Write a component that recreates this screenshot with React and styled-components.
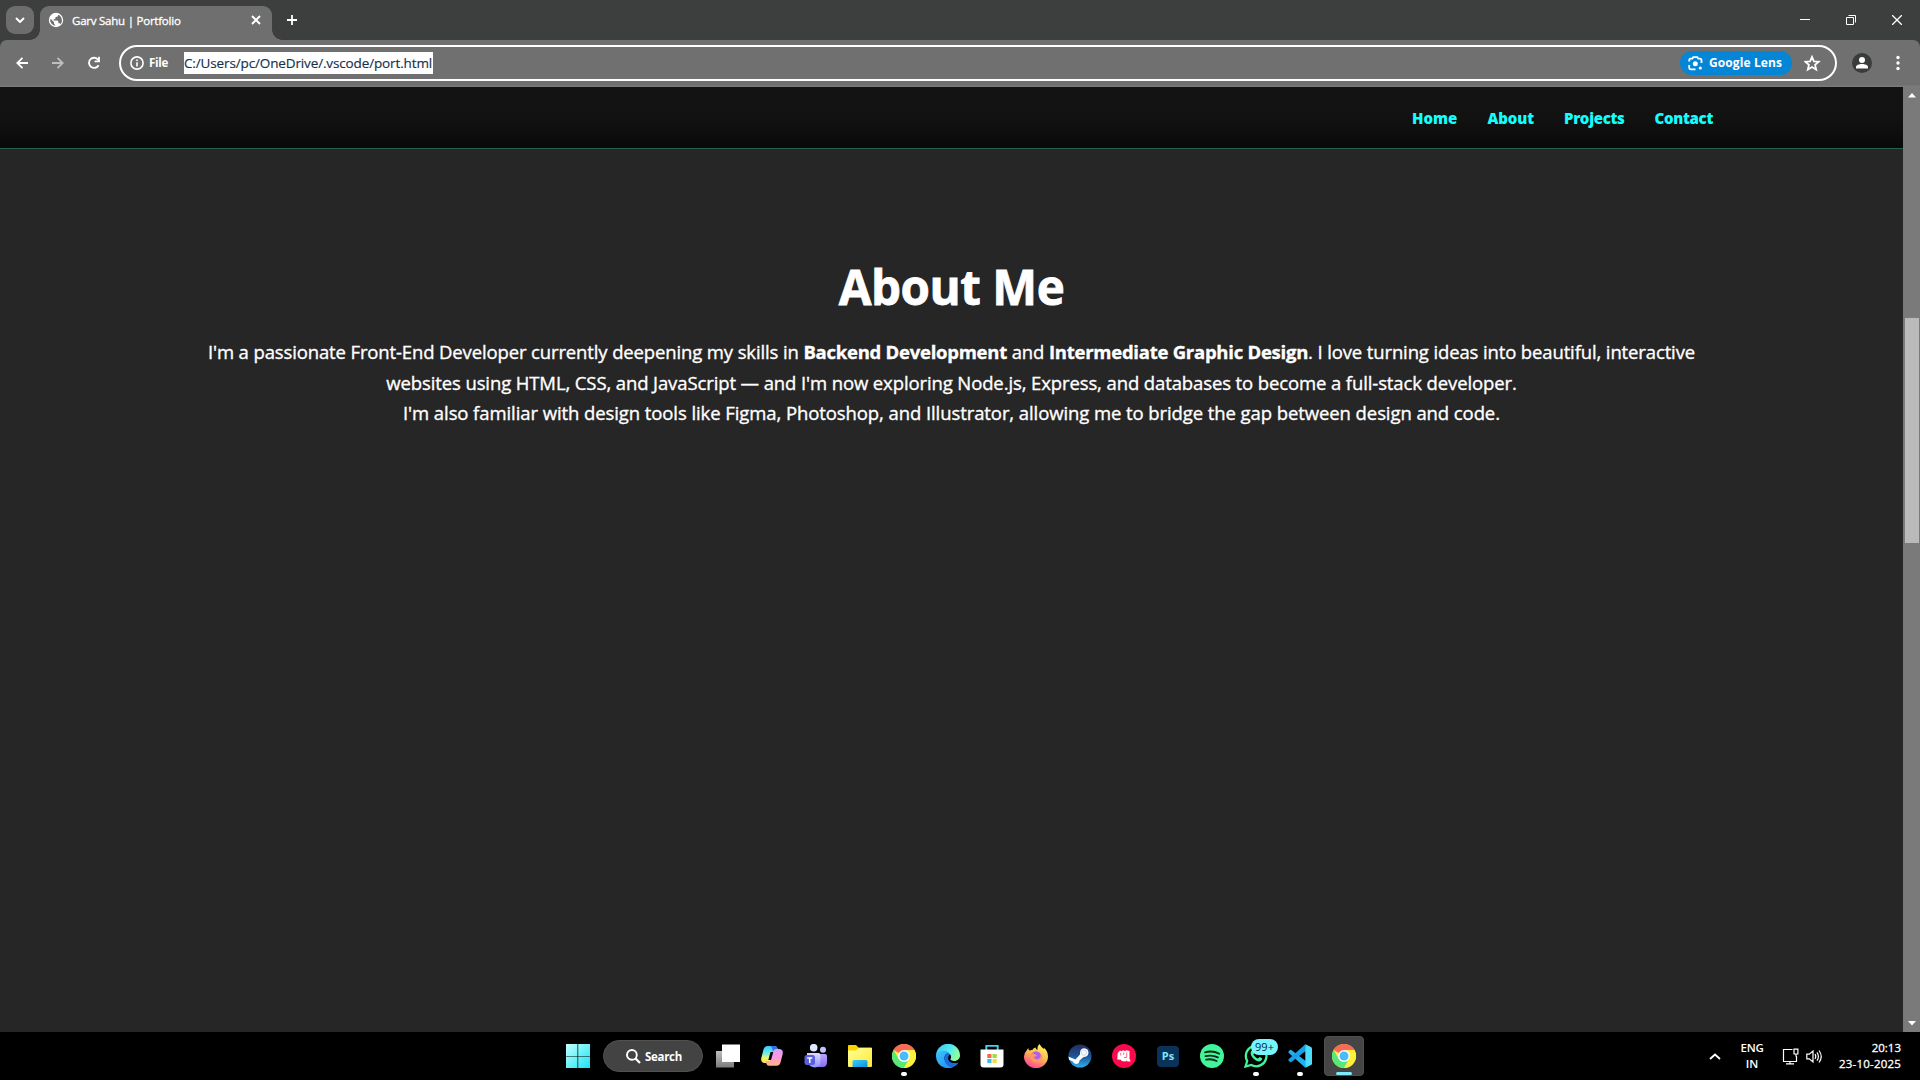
import React from "react";
import styled, { createGlobalStyle } from "styled-components";

const Global = createGlobalStyle`
  *, *::before, *::after { box-sizing: border-box; }
  html, body { margin: 0; padding: 0; }
  body { background: #000; font-family: "Open Sans", "Noto Sans", sans-serif; overflow: hidden; }
  svg { display: block; }
`;

const Screen = styled.div`
  width: 1920px;
  height: 1080px;
  display: flex;
  flex-direction: column;
  overflow: hidden;
`;

const Label = styled.span`
  font-size: ${(p) => p.$size}px;
  font-weight: ${(p) => p.$weight || 400};
  letter-spacing: ${(p) => p.$track || 0}px;
  line-height: ${(p) => p.$line || 16}px;
  color: ${(p) => p.$color || "#fff"};
  -webkit-text-stroke: ${(p) => p.$stroke || 0}px currentColor;
  white-space: nowrap;
`;

/* ---------- browser chrome ---------- */
const TabStrip = styled.div`
  height: 40px;
  flex: none;
  display: flex;
  background: #3d3f3e;
  padding-left: 6px;
`;

const TabMenu = styled.div`
  width: 28px;
  height: 28px;
  margin-top: 6px;
  border-radius: 9px;
  background: #6d6d6d;
  display: grid;
  place-items: center;
`;

const Tab = styled.div`
  position: relative;
  width: 232px;
  height: 34px;
  margin: 6px 0 0 6px;
  padding: 0 9px 6px 8px;
  border-radius: 9px 9px 0 0;
  background: #6f6f6f;
  display: flex;
  align-items: center;
  &::before, &::after {
    content: "";
    position: absolute;
    bottom: 0;
    width: 10px;
    height: 10px;
  }
  &::before { left: -10px; background: radial-gradient(circle at 0 0, transparent 9.5px, #6f6f6f 10px); }
  &::after { right: -10px; background: radial-gradient(circle at 100% 0, transparent 9.5px, #6f6f6f 10px); }
`;

const TabTitle = styled.div`
  flex: 1;
  padding: 2px 0 0 8px;
  display: flex;
`;

const NewTab = styled.div`
  margin: 6px 0 0 10px;
  width: 20px;
  height: 28px;
  display: grid;
  place-items: center;
`;

const WindowButtons = styled.div`
  margin-left: auto;
  display: flex;
`;

const WindowButton = styled.div`
  width: 46px;
  height: 40px;
  display: grid;
  place-items: center;
`;

const ToolbarBack = styled.div`
  background: #3d3f3e;
`;

const Toolbar = styled.div`
  height: 47px;
  flex: none;
  display: flex;
  align-items: center;
  background: linear-gradient(#707070 0 45px, #7a7a7a 46px);
  border-radius: 7px 7px 0 0;
  padding-bottom: 1px;
`;

const NavButton = styled.div`
  width: 36px;
  height: 36px;
  display: grid;
  place-items: center;
  opacity: ${(p) => (p.$dim ? 0.55 : 1)};
`;

const NavButtons = styled.div`
  display: flex;
  padding-left: 4px;
  width: 119px;
`;

const Omnibox = styled.div`
  width: 1718px;
  height: 36px;
  border: 2px solid #fff;
  border-radius: 18px;
  display: flex;
  align-items: center;
  padding: 0 14px 0 9px;
`;

const Scheme = styled.div`
  width: 54px;
  display: flex;
  align-items: center;
  gap: 5px;
`;

const Selection = styled.div`
  height: 22px;
  width: 249px;
  background: #fff;
  display: flex;
  align-items: center;
`;

const LensPill = styled.div`
  margin-left: auto;
  width: 112px;
  height: 24px;
  border-radius: 12px;
  background: #0485d6;
  display: flex;
  align-items: center;
  padding-left: 8px;
  gap: 6px;
`;

const StarBox = styled.div`
  margin-left: 12px;
`;

const Avatar = styled.div`
  margin-left: 15px;
`;

const Dots = styled.div`
  margin-left: 24px;
`;

/* ---------- page ---------- */
const Viewport = styled.div`
  flex: 1;
  display: flex;
  min-height: 0;
`;

const Page = styled.main`
  flex: 1;
  background: #262626;
`;

const Header = styled.header`
  height: 62px;
  display: flex;
  justify-content: flex-end;
  align-items: center;
  gap: 30px;
  padding: 1px 190px 0 0;
  background: linear-gradient(#131313 0, #121212 50%, #090909 100%);
  border-bottom: 1px solid #2b5f53;
`;

const About = styled.section`
  padding-top: 105px;
  display: flex;
  flex-direction: column;
  align-items: center;
  color: #fff;
`;

const Title = styled.h2`
  margin: 0;
  font-size: 47.5px;
  font-weight: 700;
  line-height: 66px;
  letter-spacing: -0.45px;
  -webkit-text-stroke: 0.8px #fff;
  white-space: nowrap;
`;

const Copy = styled.div`
  padding-top: 17px;
  display: flex;
  flex-direction: column;
  align-items: center;
`;

const Line = styled.p`
  margin: 0;
  font-size: 18.5px;
  line-height: 30.7px;
  letter-spacing: ${(p) => p.$track || 0}px;
  -webkit-text-stroke: 0.35px #fff;
  white-space: nowrap;
  b { letter-spacing: -0.25px; }
`;

const Scrollbar = styled.div`
  width: 17px;
  background: #7a7a7a;
  display: flex;
  flex-direction: column;
  align-items: center;
`;

const ScrollArrow = styled.div`
  height: 17px;
  display: grid;
  place-items: center;
`;

const Track = styled.div`
  flex: 1;
  padding-top: 214px;
`;

const Thumb = styled.div`
  width: 14px;
  height: 225px;
  background: #bababa;
`;

/* ---------- taskbar ---------- */
const Taskbar = styled.div`
  height: 48px;
  flex: none;
  background: #000;
  display: flex;
`;

const Apps = styled.div`
  display: flex;
  align-items: center;
  padding-left: 566px;
`;

const SearchPill = styled.div`
  width: 100px;
  height: 32px;
  margin: 0 3px 0 13px;
  border-radius: 16px;
  background: #434343;
  border: 1px solid #505050;
  display: flex;
  align-items: center;
  padding: 1px 0 0 22px;
  gap: 4px;
`;

const AppSlot = styled.div`
  position: relative;
  width: 40px;
  height: 40px;
  margin: 0 2px;
  border-radius: 4px;
  display: grid;
  place-items: center;
  background: ${(p) => (p.$active ? "#454545" : "transparent")};
  border: 1px solid ${(p) => (p.$active ? "#505050" : "transparent")};
`;

const Indicator = styled.div`
  position: absolute;
  bottom: ${(p) => (p.$active ? 0 : -1)}px;
  left: 50%;
  transform: translateX(-50%);
  width: ${(p) => (p.$active ? 16 : 6)}px;
  height: ${(p) => (p.$active ? 3 : 4)}px;
  border-radius: 2px;
  background: ${(p) => (p.$active ? "#7fe8fa" : "#fff")};
`;

const Badge = styled.div`
  position: absolute;
  left: 14px;
  top: 2px;
  width: 27px;
  height: 16px;
  border-radius: 8px;
  background: #76f5ff;
  display: grid;
  place-items: center;
`;

const Tray = styled.div`
  margin-left: auto;
  display: flex;
  align-items: center;
  padding-right: 19px;
`;

const TrayIcons = styled.div`
  display: flex;
  align-items: center;
  gap: 7px;
  width: 57px;
`;

const Lang = styled.div`
  width: 30px;
  margin: 0 15px 0 16px;
  display: flex;
  flex-direction: column;
  align-items: center;
`;

const Clock = styled.div`
  width: 62px;
  display: flex;
  flex-direction: column;
  align-items: flex-end;
`;

const PsTile = styled.div`
  width: 22px;
  height: 21px;
  border-radius: 4px;
  background: #0a3357;
  display: grid;
  place-items: center;
`;

/* ---------- icons ---------- */
const Stroke = ({ w, h, d, sw = 2 }) => (
  <svg width={w} height={h} viewBox={`0 0 ${w} ${h}`} fill="none" stroke="#fff" strokeWidth={sw}>
    <path d={d} />
  </svg>
);

const Globe = () => (
  <svg width="16" height="16" viewBox="0 0 16 16">
    <circle cx="8" cy="8" r="7.2" fill="#fff" />
    <path d="M2.600 6.800L6 10.200V11.500L7.400 13.600C4.400 13.400 2.300 10.800 2.200 8.200ZM10 2.800V4.200L7.400 5.300V6.800L5.600 7.400V8.400H9.400L10.400 9.600V11.200H11.600L12.800 12C14 10.200 14.200 8.500 13.600 6.500C12.900 4.500 11.700 3.400 10 2.800Z" fill="#6f6f6f" />
  </svg>
);

const Reload = () => (
  <svg width="14" height="14" viewBox="0 0 14 14">
    <path d="M11.600 9.200A5.100 5.100 0 1 1 10.800 3.300L12 4.600" fill="none" stroke="#fff" strokeWidth="1.900" />
    <path d="M12.900 .8V6.200H7.600V4.400H11.100V.8Z" fill="#fff" />
  </svg>
);

const Info = () => (
  <svg width="14" height="14" viewBox="0 0 14 14">
    <circle cx="7" cy="7" r="6.100" fill="none" stroke="#fff" strokeWidth="1.600" />
    <path d="M6.200 6.200h1.600v4.200H6.200zM6.200 3.500h1.600v1.600H6.200z" fill="#fff" />
  </svg>
);

const Lens = () => (
  <svg width="15" height="15" viewBox="0 0 15 15">
    <path d="M1.200 5.500V4.200Q1.200 2.700 2.700 2.700H4.300L5.300 1.200H9.300L10.300 2.700H11.800Q13.500 2.700 13.500 4.400V7M1.200 9V11.800Q1.200 13.300 2.700 13.300H7.500" fill="none" stroke="#fff" strokeWidth="1.800" />
    <circle cx="7.300" cy="7.700" r="2.500" fill="#fff" />
    <circle cx="12.300" cy="12" r="1.600" fill="#fff" />
  </svg>
);

const Star = () => (
  <svg width="17" height="17" viewBox="0 0 17 17">
    <path d="M8 1.900L9.900 6.300L14.700 6.700L11.100 9.900L12.200 14.600L8 12.100L3.800 14.600L4.900 9.900L1.300 6.700L6.100 6.300Z" fill="none" stroke="#fff" strokeWidth="1.800" />
  </svg>
);

const Person = () => (
  <svg width="20" height="20" viewBox="0 0 20 20">
    <circle cx="10" cy="10" r="10" fill="#3a3b3b" />
    <circle cx="10" cy="7" r="3" fill="#fff" />
    <path d="M4 15.500V14C4 12 7 11 10 11S16 12 16 14V15.500Z" fill="#fff" />
  </svg>
);

const Kebab = () => (
  <svg width="4" height="16" viewBox="0 0 4 16" fill="#fff">
    <circle cx="2" cy="2.500" r="1.700" />
    <circle cx="2" cy="8" r="1.700" />
    <circle cx="2" cy="13.500" r="1.700" />
  </svg>
);

const Windows = () => (
  <svg width="24" height="24" viewBox="0 0 24 24">
    <defs>
      <linearGradient id="win" gradientUnits="userSpaceOnUse" x1="0" y1="0" x2="24" y2="24">
        <stop offset="0" stopColor="#c4ffff" />
        <stop offset=".5" stopColor="#6cf2f8" />
        <stop offset="1" stopColor="#22e0f4" />
      </linearGradient>
    </defs>
    <path d="M0 0H11.500V12H0ZM12.200 0H24V12H12.200ZM0 12.600H11.500V24H0ZM12.200 12.600H24V24H12.200Z" fill="url(#win)" />
  </svg>
);

const Magnifier = () => (
  <svg width="15" height="15" viewBox="0 0 15 15" fill="none" stroke="#fff" strokeWidth="1.900">
    <circle cx="5.900" cy="5.900" r="4.900" />
    <path d="M9.500 9.500L14 14" strokeWidth="2.300" />
  </svg>
);

const TaskView = () => (
  <svg width="24" height="24" viewBox="0 0 24 24">
    <defs>
      <linearGradient id="tv" x1="0" y1="0" x2="0" y2="1">
        <stop offset="0" stopColor="#bdbdbd" />
        <stop offset="1" stopColor="#7c7c7c" />
      </linearGradient>
    </defs>
    <rect x="0" y="7" width="18" height="16.500" fill="url(#tv)" />
    <rect x="6" y="0.500" width="18" height="17.500" fill="#fff" />
  </svg>
);

const Copilot = () => (
  <svg width="24" height="24" viewBox="0 0 24 24">
    <defs>
      <linearGradient id="cp1" x1="0" y1="0" x2="0" y2="1">
        <stop offset="0" stopColor="#3cc4ff" />
        <stop offset=".45" stopColor="#6ff0e0" />
        <stop offset=".7" stopColor="#f2f86a" />
        <stop offset="1" stopColor="#ffe04a" />
      </linearGradient>
      <linearGradient id="cp2" x1="0" y1="0" x2="0" y2="1">
        <stop offset="0" stopColor="#d9a0ff" />
        <stop offset=".5" stopColor="#ff98e0" />
        <stop offset="1" stopColor="#ffb878" />
      </linearGradient>
    </defs>
    <path d="M7.500 2H15Q17 2 17.700 4.500L18.500 7H15.500Q13.500 7 12.800 9.200L10.600 17.200Q10 19 8 19H4.500Q.5 18.500 1.300 14L3.500 5.500Q4.500 2 7.500 2Z" fill="url(#cp1)" />
    <path d="M14 2Q17 2 17.700 4.500L18.500 7H14.500Q13.500 7 13 8.500Q12.500 3 10.500 2Z" fill="#2f6ef0" />
    <path d="M16.500 21.800H9Q7 21.800 6.300 19.500L5.500 17H8.500Q10.500 17 11.200 14.800L13.400 6.800Q14 5 16 5H19.500Q23.500 5.500 22.700 10L20.500 18.500Q19.500 21.800 16.500 21.800Z" fill="url(#cp2)" />
    <path d="M10.500 8H13.200L11 16H8.300Z" fill="#0a0510" />
  </svg>
);

const Teams = () => (
  <svg width="24" height="24" viewBox="0 0 24 24">
    <defs>
      <linearGradient id="tm" x1="0" y1="0" x2="0" y2="1">
        <stop offset="0" stopColor="#dcdcff" />
        <stop offset="1" stopColor="#8f90fa" />
      </linearGradient>
      <linearGradient id="tm2" x1="0" y1="0" x2="0" y2="1">
        <stop offset="0" stopColor="#b9a4ff" />
        <stop offset="1" stopColor="#8a6ef0" />
      </linearGradient>
    </defs>
    <circle cx="9.700" cy="3.700" r="3.800" fill="#dfe6ff" />
    <circle cx="19" cy="5.800" r="3" fill="#c2c4ff" />
    <path d="M14 10H21Q23 10 23 12V18Q23 23 18.500 23H14Z" fill="url(#tm2)" />
    <path d="M3 9H14.500Q16.500 9 16.500 11V17Q16.500 23.500 11 23.500T3 17Z" fill="url(#tm)" />
    <rect x=".5" y="11" width="10.500" height="10" rx="2.500" fill="#5a5fe0" />
    <path d="M3.200 13.200H8.300V14.700H6.500V19H5V14.700H3.200Z" fill="#fff" />
  </svg>
);

const Explorer = () => (
  <svg width="24" height="24" viewBox="0 0 24 24">
    <defs>
      <linearGradient id="fe" x1="0" y1="0" x2="1" y2="1">
        <stop offset="0" stopColor="#ffff94" />
        <stop offset="1" stopColor="#ffe83c" />
      </linearGradient>
      <linearGradient id="fb" x1="0" y1="0" x2="1" y2="1">
        <stop offset="0" stopColor="#35d0f6" />
        <stop offset="1" stopColor="#0f8fe0" />
      </linearGradient>
    </defs>
    <path d="M0 2Q0 1 1 1H8L10.500 3.500H23Q24 3.500 24 4.500V10H0Z" fill="#fad400" />
    <path d="M0 6.500H8L10.500 4H24V22Q24 23 23 23H1Q0 23 0 22Z" fill="url(#fe)" />
    <path d="M4.500 23V17.500Q4.500 16 6 16H18Q19.500 16 19.500 17.500V23Z" fill="url(#fb)" />
  </svg>
);

const Chrome = () => (
  <svg width="24" height="24" viewBox="0 0 48 48">
    <circle cx="24" cy="24" r="24" fill="#fff03c" />
    <path d="M24 24L3.200 12A24 24 0 0 1 44.800 12H24Z" fill="#fb6a58" />
    <path d="M3.200 12A24 24 0 0 0 24 48L34.400 30L24 24L13.600 30Z" fill="#56e878" />
    <path d="M44.800 12A24 24 0 0 1 24 48L34.400 30Q37 22 32 12Z" fill="#fff03c" />
    <circle cx="24" cy="24" r="12" fill="#fff" />
    <circle cx="24" cy="24" r="9" fill="#46bdfa" />
  </svg>
);

const Edge = () => (
  <svg width="24" height="24" viewBox="0 0 24 24">
    <defs>
      <linearGradient id="ed1" x1="0" y1="0" x2="1" y2=".4">
        <stop offset="0" stopColor="#35c4f6" />
        <stop offset=".6" stopColor="#52eaf0" />
        <stop offset="1" stopColor="#8dffa0" />
      </linearGradient>
      <linearGradient id="ed2" x1="0" y1="0" x2="1" y2="1">
        <stop offset="0" stopColor="#3cc4fa" />
        <stop offset="1" stopColor="#1f86f0" />
      </linearGradient>
    </defs>
    <path d="M0 12A12 12 0 0 1 24 11.500C24 15 21.500 17 18 17C15 17 13.500 16 14.500 14.500C16 12 13.500 9 10 9C5 9 0 12 0 12Z" fill="url(#ed1)" />
    <path d="M0 12C.5 8.500 4 6.500 8 6.800C11 7 13 8.500 13.500 9.500C10.500 8.500 8.500 11 8.500 14C8.500 18.500 13 21 17 20.500C19.500 20.200 21.500 19 22.400 18.200A12 12 0 0 1 0 12Z" fill="url(#ed2)" />
    <path d="M13.300 9.500C10.500 9 8.300 11 8.300 14.500C8.300 18.500 11.500 22 15.500 23.500C19 22.500 21.500 20 22.500 18.200C19 20 14.500 19 12.800 16.500C11.800 14.800 12.500 12 14 11Z" fill="#1a6ae0" />
    <path d="M14 10.500C12 12 11.800 15 13.300 17C15 19 19.500 19.500 22.700 17.300L24 14C22.500 16.500 20 17 18 17C15 17 13.500 16 14.500 14.500C15.200 13 14.800 11.500 14 10.500Z" fill="#000" />
  </svg>
);

const Store = () => (
  <svg width="24" height="24" viewBox="0 0 24 24">
    <path d="M6.300 6V1.900H17.700V6" fill="none" stroke="#44d2f0" strokeWidth="1.900" />
    <path d="M.5 5.500H23.500V20.500Q23.500 23.500 20.500 23.500H3.500Q.5 23.500 .5 20.500Z" fill="#fff" />
    <path d="M7.300 10H11.500V14H7.300Z" fill="#f2694a" />
    <path d="M12.500 10H16.700V14H12.500Z" fill="#9fdc3c" />
    <path d="M7.300 15H11.500V19H7.300Z" fill="#30c0f4" />
    <path d="M12.500 15H16.700V19H12.500Z" fill="#ffd838" />
  </svg>
);

const Firefox = () => (
  <svg width="24" height="24" viewBox="0 0 24 24">
    <defs>
      <linearGradient id="ff" x1=".8" y1="0" x2=".3" y2="1">
        <stop offset="0" stopColor="#fff860" />
        <stop offset=".5" stopColor="#ffb850" />
        <stop offset="1" stopColor="#ff3f9a" />
      </linearGradient>
    </defs>
    <path d="M4.200 4Q4.500 6 5.500 6.500Q7 5.800 8.300 6Q9.500 3.500 11.500 3.500Q11.500 5 13.500 6Q13 2 15.500 0Q17 3 20 5L20.500 4Q24 8 24 12.500A12 11.500 0 0 1 0 12.500Q0 9 2.300 7Z" fill="url(#ff)" />
    <circle cx="12" cy="12.500" r="5.200" fill="#b25cf0" />
    <path d="M6.500 10Q9 8.500 11 10.500L13 11Q12 13 9.500 13Q11 16 14.500 15Q17.500 13.500 16.500 9Q20 13 17 16.500Q13 20 9 17.500Q5.500 15 6.500 10Z" fill="#ff9a5d" />
  </svg>
);

const Steam = () => (
  <svg width="24" height="24" viewBox="0 0 24 24">
    <defs>
      <linearGradient id="st" x1="0" y1="0" x2="0" y2="1">
        <stop offset="0" stopColor="#222c60" />
        <stop offset=".5" stopColor="#1d5596" />
        <stop offset="1" stopColor="#30b0ee" />
      </linearGradient>
      <clipPath id="stc"><circle cx="12" cy="12" r="11.500" /></clipPath>
    </defs>
    <circle cx="12" cy="12" r="11.500" fill="url(#st)" />
    <g clipPath="url(#stc)">
      <path d="M0 12.500L7.500 15.500L12 10.500Q11.500 4.500 16 4.200Q20.500 4.500 20.500 8.700Q20 13 15.500 13L11.500 16.500Q11 20 8 20Q5.500 20 4.500 17.300L0 15.500Z" fill="#fff" />
    </g>
    <circle cx="16" cy="8.700" r="2.700" fill="#f6f9ff" stroke="#bccde2" strokeWidth=".7" />
  </svg>
);

const Fist = () => (
  <svg width="24" height="24" viewBox="0 0 24 24">
    <circle cx="12" cy="12" r="12" fill="#fa0a4c" />
    <path d="M5.800 9L8 6.500L9.500 7.200L11 6.300L13 7L14.500 6.300L17.500 7V15L18.300 16V17.500H15.500L14.500 16.500L13.500 17.500L9.500 17L9 15.800L5.300 15.500L5.500 12Z" fill="#fff" />
    <path d="M8.700 9V11.500M11.700 8.500V11M14.700 8.500V13.500H12" fill="none" stroke="#fa0a4c" strokeWidth=".6" />
  </svg>
);

const Spotify = () => (
  <svg width="24" height="24" viewBox="0 0 24 24">
    <circle cx="12" cy="12" r="12" fill="#42f59a" />
    <path d="M5 8.300Q12.500 6.200 19.300 9.700M5.500 12.200Q12 10.500 17.900 13.400M6.200 15.700Q11.800 14.400 16.600 17" fill="none" stroke="#0b2a18" strokeWidth="1.800" strokeLinecap="round" />
  </svg>
);

const WhatsApp = () => (
  <svg width="24" height="24" viewBox="0 0 24 24">
    <path d="M1.500 22.500L3.200 17A10.300 10.300 0 1 1 7.300 21Z" fill="none" stroke="#42f59a" strokeWidth="2.300" />
    <path d="M8.300 6.200C9.200 5.900 9.500 6.500 10.400 8.800C10.500 9.300 9.300 10.300 9.500 10.700C10.600 12.600 12 13.800 14 14.600C14.600 14.600 15.300 13 15.800 13.100L18.200 14.300C18.500 15.900 17 17.300 15.400 17.400C11.500 17.300 6.800 12.800 6.600 9.200C6.600 7.800 7.500 6.500 8.300 6.200Z" fill="#42f59a" />
  </svg>
);

const VSCode = () => (
  <svg width="24" height="24" viewBox="0 0 24 24">
    <path d="M17.300 23.700L.6 8.700Q0 8 .6 7.400L2 6.100Q2.600 5.600 3.300 6.100L18 17.200Z" fill="#22aef0" />
    <path d="M17.300 .3L.6 15.300Q0 16 .6 16.600L2 17.900Q2.600 18.400 3.300 17.900L18 6.800Z" fill="#1a9ee8" />
    <path d="M17.300 .3L23 3Q24 3.500 24 4.500V19.500Q24 20.500 23 21L17.300 23.700Z" fill="#4cdcfc" />
  </svg>
);

const Monitor = () => (
  <svg width="17" height="17" viewBox="0 0 17 17" fill="none" stroke="#fff" strokeWidth="1.200">
    <path d="M10.500 1.500H1.500V13.500H14.500V8M4 15.800H12M8 13.500V15.800M12 1.100H15.900V6H12ZM14 6V8.500" />
  </svg>
);

const Volume = () => (
  <svg width="17" height="15" viewBox="0 0 17 15" fill="none" stroke="#fff" strokeWidth="1.200">
    <path d="M.8 5.200H3.300L7 2V13L3.300 9.800H.8ZM9 5.200Q10.500 7.500 9 9.800M11 3.300Q13.800 7.500 11 11.700M13 1.500Q17.500 7.500 13 13.500" />
  </svg>
);

const Triangle = ({ down }) => (
  <svg width="8" height="5" viewBox="0 0 8 5">
    <path d={down ? "M0 0H8L4 4.500Z" : "M0 4.500H8L4 0Z"} fill="#fff" />
  </svg>
);

const links = [
  { text: "Home", track: 0.05 },
  { text: "About", track: -0.1 },
  { text: "Projects", track: -0.3 },
  { text: "Contact", track: -0.3 },
];

const apps = [
  { id: "taskview", icon: <TaskView /> },
  { id: "copilot", icon: <Copilot /> },
  { id: "teams", icon: <Teams /> },
  { id: "explorer", icon: <Explorer /> },
  { id: "chrome", icon: <Chrome />, open: true },
  { id: "edge", icon: <Edge /> },
  { id: "store", icon: <Store /> },
  { id: "firefox", icon: <Firefox /> },
  { id: "steam", icon: <Steam /> },
  { id: "fist", icon: <Fist /> },
  { id: "ps", icon: <PsTile><Label $size={11} $weight={700} $color="#7fe8ff">Ps</Label></PsTile> },
  { id: "spotify", icon: <Spotify /> },
  { id: "whatsapp", icon: <WhatsApp />, open: true, badge: "99+" },
  { id: "vscode", icon: <VSCode />, open: true },
  { id: "chrome-active", icon: <Chrome />, open: true, active: true },
];

export default function App() {
  return (
    <>
      <Global />
      <Screen>
        <TabStrip>
          <TabMenu><Stroke w={10} h={6} d="M1 1L5 5L9 1" /></TabMenu>
          <Tab>
            <Globe />
            <TabTitle><Label $size={11.5} $track={-0.23} $stroke={0.3}>Garv Sahu | Portfolio</Label></TabTitle>
            <Stroke w={14} h={10} d="M3 1L11 9M11 1L3 9" />
          </Tab>
          <NewTab><Stroke w={10} h={10} d="M5 0V10M0 5H10" sw={1.8} /></NewTab>
          <WindowButtons>
            <WindowButton><Stroke w={10} h={2} d="M0 .5H10" sw={1} /></WindowButton>
            <WindowButton><Stroke w={10} h={10} d="M.5 2.500H7.500V9.500H.5ZM2.500 .5H9.500V7.500" sw={1} /></WindowButton>
            <WindowButton><Stroke w={10} h={10} d="M0 0L10 10M10 0L0 10" sw={1.3} /></WindowButton>
          </WindowButtons>
        </TabStrip>
        <ToolbarBack>
          <Toolbar>
            <NavButtons>
              <NavButton><Stroke w={12} h={12} d="M12 6H1.500M6.500 .8L1.300 6L6.500 11.200" sw={1.8} /></NavButton>
              <NavButton $dim><Stroke w={12} h={12} d="M0 6H10.500M5.500 .8L10.700 6L5.500 11.200" sw={1.8} /></NavButton>
              <NavButton><Reload /></NavButton>
            </NavButtons>
            <Omnibox>
              <Scheme><Info /><Label $size={11.5} $weight={700} $track={-0.3}>File</Label></Scheme>
              <Selection><Label $size={13.5} $track={-0.135} $stroke={0.15} $color="#14304e">C:/Users/pc/OneDrive/.vscode/port.html</Label></Selection>
              <LensPill><Lens /><Label $size={12} $weight={700} $track={0.1}>Google Lens</Label></LensPill>
              <StarBox><Star /></StarBox>
            </Omnibox>
            <Avatar><Person /></Avatar>
            <Dots><Kebab /></Dots>
          </Toolbar>
        </ToolbarBack>
        <Viewport>
          <Page>
            <Header>
              {links.map((l) => (
                <Label key={l.text} $size={15} $weight={800} $track={l.track} $color="#1ff">{l.text}</Label>
              ))}
            </Header>
            <About>
              <Title>About Me</Title>
              <Copy>
                <Line $track={-0.13}>I'm a passionate Front-End Developer currently deepening my skills in <b>Backend Development</b> and <b>Intermediate Graphic Design</b>. I love turning ideas into beautiful, interactive</Line>
                <Line $track={-0.112}>websites using HTML, CSS, and JavaScript — and I'm now exploring Node.js, Express, and databases to become a full-stack developer.</Line>
                <Line $track={-0.085}>I'm also familiar with design tools like Figma, Photoshop, and Illustrator, allowing me to bridge the gap between design and code.</Line>
              </Copy>
            </About>
          </Page>
          <Scrollbar>
            <ScrollArrow><Triangle /></ScrollArrow>
            <Track><Thumb /></Track>
            <ScrollArrow><Triangle down /></ScrollArrow>
          </Scrollbar>
        </Viewport>
        <Taskbar>
          <Apps>
            <Windows />
            <SearchPill><Magnifier /><Label $size={11.5} $weight={700} $track={-0.3}>Search</Label></SearchPill>
            {apps.map((a) => (
              <AppSlot key={a.id} $active={a.active}>
                {a.icon}
                {a.badge && <Badge><Label $size={11} $color="#0b2733">{a.badge}</Label></Badge>}
                {a.open && <Indicator $active={a.active} />}
              </AppSlot>
            ))}
          </Apps>
          <Tray>
            <Stroke w={12} h={7} d="M1 6L6 1.500L11 6" sw={1.8} />
            <Lang>
              <Label $size={11.5} $weight={600} $track={-0.3}>ENG</Label>
              <Label $size={11.5} $weight={600}>IN</Label>
            </Lang>
            <TrayIcons><Monitor /><Volume /></TrayIcons>
            <Clock>
              <Label $size={11.5} $stroke={0.3}>20:13</Label>
              <Label $size={11.5} $track={0.2} $stroke={0.3}>23-10-2025</Label>
            </Clock>
          </Tray>
        </Taskbar>
      </Screen>
    </>
  );
}
